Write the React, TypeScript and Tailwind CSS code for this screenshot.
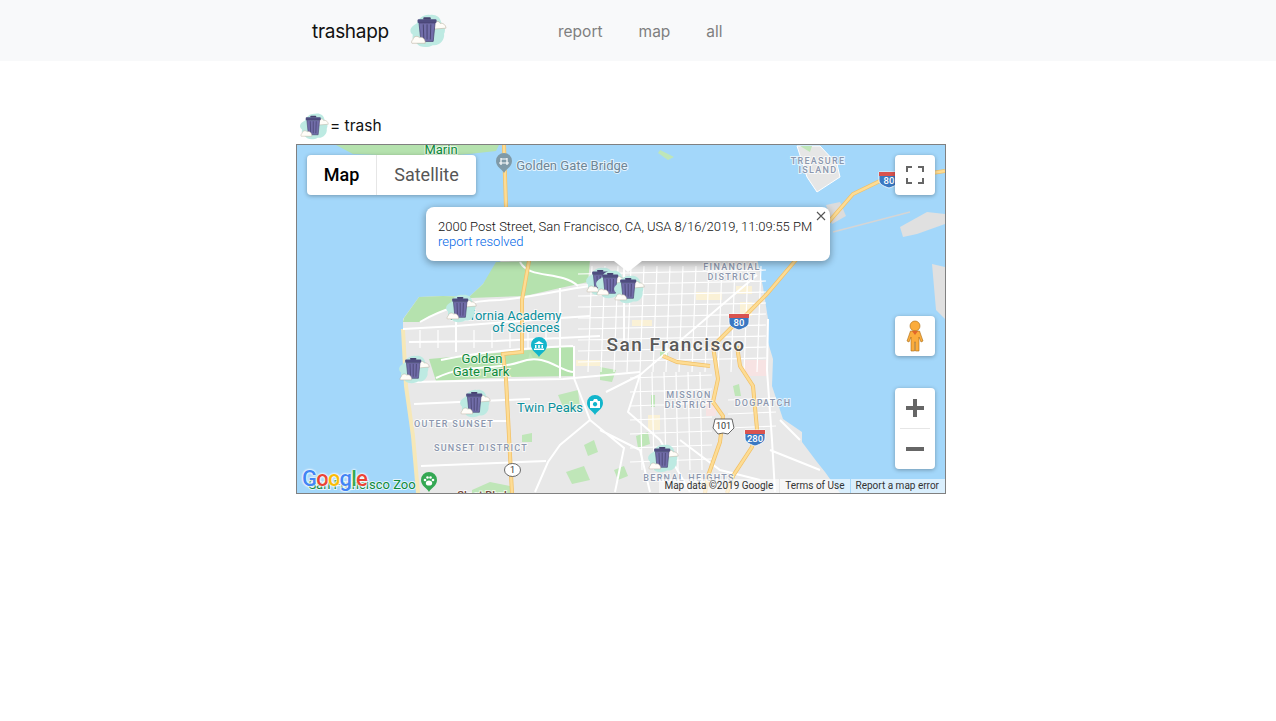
import React from 'react';

const inter = { fontFamily: 'Inter, sans-serif' };

// trash can with the teal blob behind it, drawn on a 40x36 box
const TrashArt: React.FC = () => (
  <>
    <path d="M8 10 C10 4 16 0 22 1 C28 0 33 3 34 9 C38 12 39 17 37 21 C38 28 32 34 25 33 C20 36 11 36 8 31 C4 29 3 25 4 22 C0 19 0 14 8 10 Z" fill="#bdeae2" />
    <path d="M26 11 C27 7 32 7 33 10 C36 9 39 12 39 15 L26 16 Z" fill="#fffdf8" stroke="#b8ad9c" strokeWidth="0.6" />
    <rect x="15" y="3.500" width="8" height="2.500" rx="1" fill="#46436f" />
    <rect x="9" y="5.500" width="20" height="4" rx="1" fill="#4f4c80" />
    <path d="M10.500 9.500 H27.500 L25.500 29 H12.500 Z" fill="#716da9" stroke="#46436f" strokeWidth="0.8" />
    <path d="M15 11 L15.600 27 M19 11 V27 M23 11 L22.400 27" stroke="#46436f" strokeWidth="1" fill="none" />
    <path d="M4 27 C5 23 9 23 11 25 C13 24 16 25 17 29 L17 31 L3 31 C2 30 3 28 4 27 Z" fill="#fffdf8" stroke="#b8ad9c" strokeWidth="0.6" />
  </>
);

const TrashIcon: React.FC<{ className: string }> = ({ className }) => (
  <svg viewBox="0 0 40 36" className={className}>
    <TrashArt />
  </svg>
);

const Marker: React.FC<{ cx: number; cy: number }> = ({ cx, cy }) => (
  <svg x={cx - 16} y={cy - 14} width="32" height="29" viewBox="0 0 40 36">
    <TrashArt />
  </svg>
);

type Glyph = 'bridge' | 'museum' | 'camera' | 'paw';

const Pin: React.FC<{ x: number; y: number; color: string; glyph: Glyph }> = ({ x, y, color, glyph }) => (
  <g>
    <path d={`M${x} ${y + 10} C${x - 2} ${y + 6} ${x - 8} ${y + 4} ${x - 8} ${y - 2} A8 8 0 1 1 ${x + 8} ${y - 2} C${x + 8} ${y + 4} ${x + 2} ${y + 6} ${x} ${y + 10} Z`} fill={color} />
    {glyph === 'bridge' && (
      <path d={`M${x - 5} ${y} H${x + 5} M${x - 3} ${y - 5} V${y + 2} M${x + 3} ${y - 5} V${y + 2} M${x - 3} ${y - 4} H${x + 3}`} stroke="#fff" strokeWidth="1.2" fill="none" />
    )}
    {glyph === 'museum' && (
      <path d={`M${x} ${y - 6} L${x + 5} ${y - 3} H${x - 5} Z M${x - 4} ${y - 2} H${x - 2.5} V${y + 1} H${x - 4} Z M${x - 0.8} ${y - 2} H${x + 0.8} V${y + 1} H${x - 0.8} Z M${x + 2.5} ${y - 2} H${x + 4} V${y + 1} H${x + 2.5} Z M${x - 5} ${y + 1.5} H${x + 5} V${y + 3} H${x - 5} Z`} fill="#fff" />
    )}
    {glyph === 'camera' && (
      <path fillRule="evenodd" d={`M${x - 5} ${y - 4} H${x - 2} L${x - 1} ${y - 6} H${x + 2} L${x + 3} ${y - 4} H${x + 5} V${y + 3} H${x - 5} Z M${x} ${y - 3} A2.200 2.200 0 1 0 ${x + 0.1} ${y - 3} Z`} fill="#fff" />
    )}
    {glyph === 'paw' && (
      <g fill="#fff">
        <ellipse cx={x} cy={y + 1} rx="3.200" ry="2.600" />
        <circle cx={x - 4} cy={y - 2} r="1.300" />
        <circle cx={x - 1.500} cy={y - 4.500} r="1.300" />
        <circle cx={x + 1.500} cy={y - 4.500} r="1.300" />
        <circle cx={x + 4} cy={y - 2} r="1.300" />
      </g>
    )}
  </g>
);

const Interstate: React.FC<{ x: number; y: number; label: string }> = ({ x, y, label }) => (
  <g>
    <path d={`M${x - 10} ${y - 8} H${x + 10} V${y} C${x + 10} ${y + 5} ${x + 3} ${y + 7} ${x} ${y + 8} C${x - 3} ${y + 7} ${x - 10} ${y + 5} ${x - 10} ${y} Z`} fill="#3a78c2" stroke="#fff" strokeWidth="0.8" />
    <path d={`M${x - 10} ${y - 8} H${x + 10} V${y - 4} H${x - 10} Z`} fill="#d9534f" />
    <text x={x} y={y + 4} textAnchor="middle" fontSize="9.500" fontWeight="500" fill="#fff">{label}</text>
  </g>
);

const labels: { x: number; y: number; t: string; c: string; s: number; w?: number; ls?: number }[] = [
  { x: 441, y: 154, t: 'Marin', c: '#0f8a3c', s: 13 },
  { x: 572, y: 170, t: 'Golden Gate Bridge', c: '#6d8596', s: 13 },
  { x: 505, y: 320, t: 'California Academy', c: '#0b8f9c', s: 13 },
  { x: 526, y: 332, t: 'of Sciences', c: '#0b8f9c', s: 13 },
  { x: 482, y: 363, t: 'Golden', c: '#0f8a3c', s: 13 },
  { x: 481, y: 376, t: 'Gate Park', c: '#0f8a3c', s: 13 },
  { x: 550, y: 412, t: 'Twin Peaks', c: '#0b8f9c', s: 13 },
  { x: 676, y: 351, t: 'San Francisco', c: '#5a5a5a', s: 19, w: 500, ls: 1.5 },
  { x: 454, y: 427, t: 'OUTER SUNSET', c: '#8c97ae', s: 9, w: 500, ls: 1.3 },
  { x: 481, y: 451, t: 'SUNSET DISTRICT', c: '#8c97ae', s: 9, w: 500, ls: 1.3 },
  { x: 689, y: 398, t: 'MISSION', c: '#8c97ae', s: 9, w: 500, ls: 1.3 },
  { x: 689, y: 408, t: 'DISTRICT', c: '#8c97ae', s: 9, w: 500, ls: 1.3 },
  { x: 763, y: 406, t: 'DOGPATCH', c: '#8c97ae', s: 9, w: 500, ls: 1.3 },
  { x: 689, y: 481, t: 'BERNAL HEIGHTS', c: '#8c97ae', s: 9, w: 500, ls: 1.3 },
  { x: 818, y: 164, t: 'TREASURE', c: '#8c97ae', s: 9, w: 500, ls: 1.3 },
  { x: 818, y: 173, t: 'ISLAND', c: '#8c97ae', s: 9, w: 500, ls: 1.3 },
  { x: 732, y: 270, t: 'FINANCIAL', c: '#8c97ae', s: 9, w: 500, ls: 1.3 },
  { x: 732, y: 280, t: 'DISTRICT', c: '#8c97ae', s: 9, w: 500, ls: 1.3 },
  { x: 362, y: 489, t: 'San Francisco Zoo', c: '#0f8a3c', s: 13 },
  { x: 482, y: 499, t: 'Sloat Blvd', c: '#7a4a3a', s: 11, w: 500 },
];

const greens = [
  'M800 146 L812 146 L810 152 Z',
  'M660 150 L674 157 L668 160 L658 153 Z',
  'M558 395 L578 390 L580 408 L566 414 Z',
  'M566 472 L584 466 L590 480 L572 484 Z',
  'M472 490 L490 482 L510 486 L512 493 L472 493 Z',
  'M600 367 L616 370 L612 382 L600 380 Z',
  'M636 436 L648 432 L650 444 L638 448 Z',
  'M584 445 L594 440 L598 452 L588 456 Z',
  'M614 470 L624 466 L628 476 L618 480 Z',
  'M530 352 L534 360 L528 360 Z',
  'M522 435 L532 433 L532 442 L522 442 Z',
  'M660 352 L668 350 L668 356 L660 358 Z',
  'M733 386 L739 384 L741 396 L735 396 Z',
  'M651 395 L655 395 L655 407 L651 407 Z',
];

// commercial / hospital tints
const tints: { d: string; c: string }[] = [
  { d: 'M696 292 H722 V300 H696 Z', c: '#faf1d6' },
  { d: 'M736 286 H752 V294 H736 Z', c: '#faf1d6' },
  { d: 'M740 302 H752 V316 H740 Z', c: '#faf1d6' },
  { d: 'M632 320 H652 V326 H632 Z', c: '#faf1d6' },
  { d: 'M576 360 H600 V366 H576 Z', c: '#faf1d6' },
  { d: 'M744 360 H768 V376 H744 Z', c: '#f7e3e3' },
  { d: 'M706 400 H716 V416 H706 Z', c: '#f7e3e3' },
  { d: 'M648 415 H660 V430 H648 Z', c: '#faf1d6' },
];

const grid: string[] = [];
// north east city blocks
for (let x = 592; x <= 762; x += 13) grid.push(`M${x} 266 L${x - 4} 372`);
for (let y = 270; y <= 360; y += 11) grid.push(`M578 ${y + 4} L766 ${y}`);
// mission blocks
for (let x = 640; x <= 706; x += 12) grid.push(`M${x} 372 L${x + 2} 470`);
for (let y = 378; y <= 470; y += 14) grid.push(`M630 ${y} L712 ${y - 3}`);
// richmond
for (let x = 420; x <= 556; x += 18) grid.push(`M${x} 330 L${x} 348`);
// dogpatch side
for (let y = 400; y <= 440; y += 14) grid.push(`M728 ${y} L776 ${y - 2}`);

const mainRoads = [
  'M403 329 L456 326 L560 318 L590 316',
  'M409 342 L496 341 L600 336',
  'M456 319 V352',
  'M413 382 L563 379 L640 372',
  'M414 404 L530 399',
  'M416 421 L509 421',
  'M421 466 L546 461',
  'M757 275 L640 375 L606 392',
  'M574 346 V378 L590 420 L560 445 L548 462 L535 492',
  'M590 420 L624 448 L615 492',
  'M640 375 L628 412 L660 440 L690 492',
  'M768 319 L767 370 L772 440 L775 492',
  'M560 288 V378',
  'M624 268 V350',
  'M420 322 C440 310 470 300 500 300 C530 298 560 290 590 286',
  'M520 262 C530 280 560 270 578 286',
  'M441 360 C480 352 520 348 573 346',
  'M436 378 C470 362 490 372 520 362 C545 352 560 372 574 372',
  'M600 430 L640 450 L650 492',
  'M680 440 L720 470 L760 480',
  'M780 420 L800 440 M770 450 L820 470',
];

const App: React.FC = () => {
  return (
    <div className="min-h-[721px] bg-white text-[#212529]" style={inter}>
      <nav className="bg-[#f8f9fa] h-[61px]">
        <div className="w-[684px] mx-auto pl-4 h-full flex items-center">
          <span className="text-[19px] tracking-[-0.3px] text-[#111] mr-5 w-[77px] pt-[3px] whitespace-nowrap">trashapp</span>
          <TrashIcon className="w-[38px] h-[34px]" />
          <div className="flex gap-9 ml-[111px] pt-[2px] text-[15.5px] text-[#7f7f7f]">
            <span>report</span>
            <span>map</span>
            <span>all</span>
          </div>
        </div>
      </nav>

      <main className="w-[684px] mx-auto pt-[52px]">
        <div className="flex items-center h-[26px] pl-[3px] mb-[5px] text-[15.5px] text-[#111]">
          <TrashIcon className="w-[30px] h-[27px] mr-[1px]" />
          <span>= trash</span>
        </div>

        <div className="relative w-[650px] h-[350px] border border-[#808080] overflow-hidden">
          <svg viewBox="297 145 648 348" className="block w-[648px] h-[348px]" style={{ fontFamily: 'Roboto, sans-serif' }}>
            <rect x="297" y="145" width="648" height="348" fill="#a3d7fa" />

            {/* marin and the islands */}
            <path d="M336 145 L353 154 L429 157 L469 154 L496 151 L499 145 Z" fill="#b5e2ae" />
            <path d="M797 146 L820 146 L837 164 L840 177 L817 192 L807 177 Z" fill="#e6e6e6" stroke="#fff" strokeWidth="1" />
            <path d="M900 227 L927 212 L945 214 V224 L917 234 L903 237 Z" fill="#e0e0e0" />
            <path d="M932 264 L945 267 V319 L936 310 Z" fill="#e0e0e0" />
            <path d="M826 205 L840 202 L846 216 L832 224 Z" fill="#dcdcdc" />
            <path d="M833 232 L910 212" stroke="#d5d5d5" strokeWidth="1.5" fill="none" />

            {/* city */}
            <path d="M403 329 L403 319 L419 297 L443 296 L469 297 L483 284 L496 267 L503 258 L757 258 L763 287 L768 319 L767 339 L773 359 L772 386 L783 419 L802 432 L802 442 L817 462 L825 472 L840 493 L418 493 L413 436 L406 386 Z" fill="#e8e8e8" />
            <path d="M496 262 L590 260 L588 282 L560 288 L525 296 L470 298 L445 310 L420 322 L403 322 L404 318 L419 297 L443 296 L469 297 L483 284 Z" fill="#b5e2ae" />
            <path d="M429 359 L573 346 L574 376 L509 377 L436 381 Z" fill="#b5e2ae" />
            <path d="M403 329 L406 386 L413 436 L418 493" stroke="#f6e8b8" strokeWidth="4" fill="none" />
            {greens.map((d, i) => <path key={i} d={d} fill="#bfe6b8" />)}
            {tints.map((t, i) => <path key={i} d={t.d} fill={t.c} />)}

            <path d={grid.join(' ')} stroke="#fff" strokeWidth="1.2" fill="none" />
            <path d={mainRoads.join(' ')} stroke="#fff" strokeWidth="2" fill="none" />

            {/* highways */}
            <g stroke="#f2c167" fill="none" strokeWidth="4">
              <path d="M504 145 L506 207 L529 261 L522 300 L522 352 L503 354 L506 379 L512 493" />
              <path d="M747 314 L767 294 L795 261 L833 217 L853 194 L880 181 L945 171" />
              <path d="M747 314 L733 326 L713 346 L718 379 L713 402 L723 416 L720 442 L708 476 L705 493" />
              <path d="M663 356 L677 362 L710 366" />
              <path d="M737 346 L740 366 L753 386 L757 429 L752 447 L733 476 L727 493" />
            </g>
            <g stroke="#fddc94" fill="none" strokeWidth="2.500">
              <path d="M504 145 L506 207 L529 261 L522 300 L522 352 L503 354 L506 379 L512 493" />
              <path d="M747 314 L767 294 L795 261 L833 217 L853 194 L880 181 L945 171" />
              <path d="M747 314 L733 326 L713 346 L718 379 L713 402 L723 416 L720 442 L708 476 L705 493" />
              <path d="M663 356 L677 362 L710 366" />
              <path d="M737 346 L740 366 L753 386 L757 429 L752 447 L733 476 L727 493" />
            </g>

            {labels.map((l) => (
              <text key={l.t + l.y} x={l.x} y={l.y} textAnchor="middle" fontSize={l.s} fontWeight={l.w ?? 400} letterSpacing={l.ls ?? 0} fill={l.c} stroke="#fff" strokeOpacity="0.7" strokeWidth="2" paintOrder="stroke">{l.t}</text>
            ))}

            <Pin x={504} y={163} color="#7f9aa8" glyph="bridge" />
            <Pin x={539} y={347} color="#12b5cb" glyph="museum" />
            <Pin x={595} y={405} color="#12b5cb" glyph="camera" />
            <Pin x={429} y={482} color="#34a853" glyph="paw" />

            <Interstate x={889} y={180} label="80" />
            <Interstate x={739} y={322} label="80" />
            <Interstate x={755} y={438} label="280" />
            <g>
              <path d="M715 419 H732 L734 428 L728 434 L723 433 L718 434 L713 428 Z" fill="#fff" stroke="#444" strokeWidth="0.8" />
              <text x="723.500" y="429" textAnchor="middle" fontSize="9" fill="#333">101</text>
              <ellipse cx="512.500" cy="470" rx="8" ry="6.500" fill="#fff" stroke="#444" strokeWidth="0.8" />
              <text x="512.500" y="473" textAnchor="middle" fontSize="9" fill="#333">1</text>
            </g>

            <Marker cx={414} cy={369} />
            <Marker cx={461} cy={308} />
            <Marker cx={475} cy={403} />
            <Marker cx={663} cy={458} />
            <Marker cx={601} cy={281} />
            <Marker cx={611} cy={284} />
            <Marker cx={629} cy={289} />
          </svg>

          <div className="absolute left-[5px] bottom-[3px] text-[22px] font-medium leading-none tracking-[-0.8px] [text-shadow:0_0_2px_#fff,0_0_2px_#fff,0_0_3px_#fff]" style={{ fontFamily: 'Roboto, sans-serif' }}>
            <span className="text-[#4285f4]">G</span>
            <span className="text-[#ea4335]">o</span>
            <span className="text-[#fbbc05]">o</span>
            <span className="text-[#4285f4]">g</span>
            <span className="text-[#34a853]">l</span>
            <span className="text-[#ea4335]">e</span>
          </div>

          {/* attribution */}
          <div className="absolute right-0 bottom-0 h-[14px] flex items-center text-[10px] text-[#333] whitespace-nowrap" style={{ fontFamily: 'Roboto, sans-serif' }}>
            <span className="bg-white/60 h-full pl-[5px] pr-[6px] leading-[14px]">Map data ©2019 Google</span>
            <span className="bg-white/60 h-full ml-px px-[5px] leading-[14px]">Terms of Use</span>
            <span className="bg-white/60 h-full ml-px pl-[5px] pr-[6px] leading-[14px]">Report a map error</span>
          </div>

          {/* map type */}
          <div className="absolute left-[10px] top-[10px] w-[169px] h-10 flex bg-white rounded-sm shadow-[0_1px_4px_rgba(0,0,0,0.3)] text-[18px]" style={{ fontFamily: 'Roboto, sans-serif' }}>
            <div className="w-[70px] pb-[2px] flex items-center justify-center font-medium text-black border-r border-[#e6e6e6]">Map</div>
            <div className="flex-1 pb-[2px] flex items-center justify-center text-[#565656]">Satellite</div>
          </div>

          {/* fullscreen */}
          <div className="absolute left-[598px] top-[10px] w-10 h-10 bg-white rounded-sm shadow-[0_1px_4px_rgba(0,0,0,0.3)] flex items-center justify-center">
            <svg viewBox="0 0 18 18" className="w-[18px] h-[18px]" fill="none" stroke="#666" strokeWidth="2">
              <path d="M1 6 V1 H6 M12 1 H17 V6 M17 12 V17 H12 M6 17 H1 V12" />
            </svg>
          </div>

          {/* pegman */}
          <div className="absolute left-[598px] top-[171px] w-10 h-10 bg-white rounded-sm shadow-[0_1px_4px_rgba(0,0,0,0.3)] flex items-center justify-center">
            <svg viewBox="0 0 18 32" className="w-[18px] h-8">
              <circle cx="9" cy="6" r="5" fill="#fbac3c" stroke="#a86a10" strokeWidth="0.6" />
              <path d="M4.500 11 H13.500 L17 21 L15 22 L13 17 V31 H9.500 V22 H8.500 V31 H5 V17 L3 22 L1 21 Z" fill="#fbac3c" stroke="#a86a10" strokeWidth="0.6" />
              <path d="M6 11 L9 15 L12 11 Z" fill="#e0662a" />
            </svg>
          </div>

          {/* zoom */}
          <div className="absolute left-[598px] top-[243px] w-10 h-[81px] bg-white rounded-sm shadow-[0_1px_4px_rgba(0,0,0,0.3)] flex flex-col items-center">
            <div className="h-10 flex items-center justify-center">
              <svg viewBox="0 0 18 18" className="w-[18px] h-[18px]" fill="#666"><path d="M7 0 H11 V7 H18 V11 H11 V18 H7 V11 H0 V7 H7 Z" /></svg>
            </div>
            <div className="w-[30px] h-px bg-[#e6e6e6]" />
            <div className="h-10 flex items-center justify-center">
              <svg viewBox="0 0 18 18" className="w-[18px] h-[18px]" fill="#666"><rect x="0" y="7" width="18" height="4" /></svg>
            </div>
          </div>

          {/* info window */}
          <div className="absolute left-[129px] top-[62px] w-[404px] h-[54px] bg-white rounded-lg shadow-[0_2px_7px_1px_rgba(0,0,0,0.3)] pl-3 pt-[12px] text-[13px] leading-[15px] font-light text-[#111] whitespace-nowrap" style={{ fontFamily: 'Roboto, sans-serif' }}>
            <div>2000 Post Street, San Francisco, CA, USA 8/16/2019, 11:09:55 PM</div>
            <div className="text-[#0066e6]">report resolved</div>
            <svg viewBox="0 0 10 10" className="absolute right-[4px] top-[4px] w-[10px] h-[10px]" stroke="#555" strokeWidth="1.1" fill="none">
              <path d="M1 1 L9 9 M9 1 L1 9" />
            </svg>
            <div className="absolute left-[188px] top-[54px] w-0 h-0 border-x-[14px] border-x-transparent border-t-[11px] border-t-white" />
          </div>
        </div>
      </main>
    </div>
  );
};

export default App;
